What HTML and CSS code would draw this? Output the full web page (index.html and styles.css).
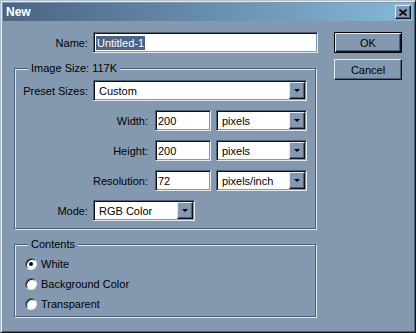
FILE: index.html
```html
<html lang="en">

<head>
    <meta charset="UTF-8">
    <meta name="viewport" content="width=device-width, initial-scale=1.0">
    <title>New</title>
    <link rel="stylesheet" href="styles.css">
</head>

<body>
    <div class="dialog">
        <div class="titlebar">
            <span>New</span>
            <span class="close">
                <svg width="8" height="7" viewBox="0 0 8 7">
                    <path d="M0.5 0.5L7.5 6.5M7.5 0.5L0.5 6.5" stroke="#000" stroke-width="1.6" fill="none" />
                </svg>
            </span>
        </div>

        <div class="main">
            <div class="left">
                <div class="row">
                    <span class="label name-label">Name:</span>
                    <div class="field name-field"><span class="sel">Untitled-1</span></div>
                </div>

                <fieldset class="group size-group">
                    <legend>Image Size: 117K</legend>
                    <div class="rows">
                        <div class="row">
                            <span class="label short">Preset Sizes:</span>
                            <div class="field select preset"><span class="value">Custom</span><span class="drop"></span></div>
                        </div>
                        <div class="row">
                            <span class="label long">Width:</span>
                            <div class="field num">200</div>
                            <div class="field select units"><span class="value">pixels</span><span class="drop"></span></div>
                        </div>
                        <div class="row">
                            <span class="label long">Height:</span>
                            <div class="field num">200</div>
                            <div class="field select units"><span class="value">pixels</span><span class="drop"></span></div>
                        </div>
                        <div class="row">
                            <span class="label long">Resolution:</span>
                            <div class="field num">72</div>
                            <div class="field select units"><span class="value">pixels/inch</span><span class="drop"></span></div>
                        </div>
                        <div class="row">
                            <span class="label short">Mode:</span>
                            <div class="field select mode"><span class="value">RGB Color</span><span class="drop"></span></div>
                        </div>
                    </div>
                </fieldset>

                <fieldset class="group contents-group">
                    <legend>Contents</legend>
                    <div class="radio-row"><span class="radio checked"></span>White</div>
                    <div class="radio-row"><span class="radio"></span>Background Color</div>
                    <div class="radio-row"><span class="radio"></span>Transparent</div>
                </fieldset>
            </div>

            <div class="buttons">
                <div class="btn default">OK</div>
                <div class="btn">Cancel</div>
            </div>
        </div>
    </div>
</body>

</html>
```

FILE: styles.css
```css
body {
    margin: 0;
    font-family: "Liberation Sans", Arial, sans-serif;
    font-size: 11px;
    color: #000;
}

.dialog {
    width: 416px;
    height: 333px;
    box-sizing: border-box;
    background-color: #8499b0;
    border: 1px solid;
    border-color: #b4c2d0 #10161e #10161e #b4c2d0;
    box-shadow: inset 1px 1px #e4eaf0, inset -1px -1px #4e6076;
    padding: 2px;
}

.titlebar {
    height: 18px;
    display: flex;
    align-items: center;
    justify-content: space-between;
    padding: 0 2px 0 3px;
    background: linear-gradient(to right, #4b6482, #84b8d8);
    color: white;
    font-weight: bold;
    font-size: 12px;
}

.close {
    width: 16px;
    height: 14px;
    box-sizing: border-box;
    display: flex;
    align-items: center;
    justify-content: center;
    background-color: #8499b0;
    border: 1px solid;
    border-color: #e4eaf0 #10161e #10161e #e4eaf0;
    box-shadow: inset -1px -1px #4e6076;
}

.close svg {
    display: block;
}

.main {
    display: flex;
    gap: 16px;
    padding: 11px 0 0 11px;
}

.left {
    width: 304px;
}

.row {
    display: flex;
    align-items: center;
    height: 21px;
}

.label {
    text-align: right;
    margin-right: 5px;
}

.name-label {
    width: 74px;
}

.label.short {
    width: 73px;
}

.label.long {
    width: 133px;
    margin-right: 7px;
}

.field {
    height: 21px;
    box-sizing: border-box;
    display: flex;
    align-items: center;
    background: white;
    border: 1px solid;
    border-color: #4e6076 #e4eaf0 #e4eaf0 #4e6076;
    box-shadow: inset 1px 1px #0c1018, inset -1px -1px #8499b0;
    padding: 0 2px;
    white-space: nowrap;
}

.name-field {
    width: 225px;
}

.sel {
    background-color: #4b6482;
    color: white;
    line-height: 14px;
    padding: 0 1px;
}

.num {
    width: 56px;
    margin-right: 5px;
}

.select {
    padding: 1px 1px 1px 5px;
}

.select .value {
    flex: 1;
}

.preset {
    width: 214px;
}

.units {
    width: 91px;
}

.mode {
    width: 102px;
}

.drop {
    width: 16px;
    height: 17px;
    box-sizing: border-box;
    display: flex;
    align-items: center;
    justify-content: center;
    background-color: #8499b0;
    border: 1px solid;
    border-color: #e4eaf0 #0c1018 #0c1018 #e4eaf0;
    box-shadow: inset -1px -1px #4e6076;
}

.drop::after {
    content: "";
    border-top: 3px solid #000;
    border-left: 3px solid transparent;
    border-right: 3px solid transparent;
}

.group {
    width: 302px;
    box-sizing: border-box;
    margin: 9px 0 0 0;
    border: 1px solid #4e6076;
    box-shadow: inset 1px 1px #e4eaf0, 1px 1px #e4eaf0;
    min-width: 0;
}

.group legend {
    margin-left: 13px;
    padding: 0 3px;
    line-height: 13px;
    background-color: #8499b0;
}

.size-group {
    padding: 5px 0 7px 0;
}

.rows {
    display: flex;
    flex-direction: column;
    gap: 9px;
}

.contents-group {
    padding: 3px 0 2px 0;
}

.radio-row {
    height: 20px;
    display: flex;
    align-items: center;
    gap: 4px;
    padding-left: 10px;
}

.radio {
    width: 12px;
    height: 12px;
    box-sizing: border-box;
    border-radius: 50%;
    display: flex;
    align-items: center;
    justify-content: center;
    background: white;
    border: 1px solid;
    border-color: #4e6076 #e4eaf0 #e4eaf0 #4e6076;
    box-shadow: inset 1px 1px #0c1018;
}

.radio.checked::after {
    content: "";
    width: 4px;
    height: 4px;
    border-radius: 50%;
    background: #000;
}

.buttons {
    display: flex;
    flex-direction: column;
    gap: 6px;
}

.btn {
    width: 68px;
    height: 21px;
    box-sizing: border-box;
    display: flex;
    align-items: center;
    justify-content: center;
    background-color: #8499b0;
    border: 1px solid;
    border-color: #e4eaf0 #10161e #10161e #e4eaf0;
    box-shadow: inset -1px -1px #4e6076;
}

.btn.default {
    border-color: #000;
    box-shadow: inset 1px 1px #e4eaf0, inset -1px -1px #10161e, inset -2px -2px #4e6076;
}
```
